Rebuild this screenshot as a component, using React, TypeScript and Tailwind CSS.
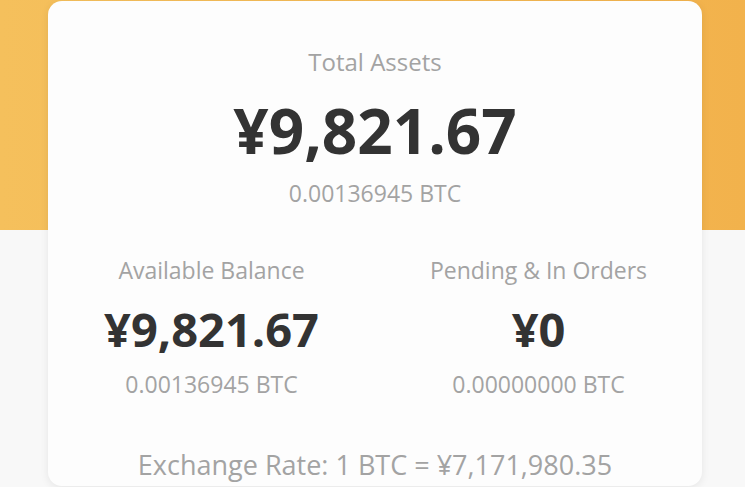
const font = "font-['Open_Sans',_'Liberation_Sans',_sans-serif]";

type StatProps = {
  label: string;
  value: string;
  btc: string;
};

const Stat: React.FC<StatProps> = ({ label, value, btc }) => {
  return (
    <div className="flex flex-col items-center">
      <div className="text-[23px] leading-[30px] text-[#a3a3a3]">{label}</div>
      <div className="mt-[17px] text-[47px] leading-[54px] font-bold text-[#333333]">
        {value}
      </div>
      <div className="mt-[13px] text-[23px] leading-[30px] text-[#a3a3a3]">{btc}</div>
    </div>
  );
};

export default function App() {
  return (
    <div className={`relative h-[487px] w-[745px] overflow-hidden bg-[#f8f8f8] ${font}`}>
      <div className="absolute left-0 top-0 h-[230px] w-full bg-gradient-to-r from-[#f5c05c] to-[#f2b24c]" />
      <div className="relative ml-[48px] mr-[43px] mt-[1px] h-[485px] rounded-[14px] bg-[#fdfdfd] pt-[45px] shadow-[0_2px_8px_rgba(0,0,0,0.08)]">
        <div className="flex flex-col items-center">
          <div className="text-[24px] leading-[32px] text-[#a3a3a3]">Total Assets</div>
          <div className="mt-[17px] text-[62px] leading-[70px] font-bold text-[#333333]">
            ¥9,821.67
          </div>
          <div className="mt-[13px] text-[23px] leading-[30px] text-[#a3a3a3]">0.00136945 BTC</div>
        </div>
        <div className="mt-[47px] grid grid-cols-2">
          <Stat label="Available Balance" value="¥9,821.67" btc="0.00136945 BTC" />
          <Stat label="Pending & In Orders" value="¥0" btc="0.00000000 BTC" />
        </div>
        <div className="mt-[48px] text-center text-[27px] leading-[36px] text-[#a3a3a3]">
          Exchange Rate: 1 BTC = ¥7,171,980.35
        </div>
      </div>
    </div>
  );
}
